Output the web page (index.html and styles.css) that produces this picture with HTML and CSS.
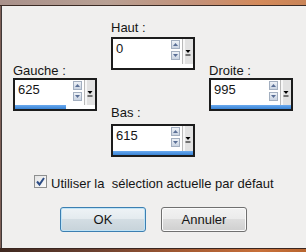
FILE: index.html
```html
<!DOCTYPE html>
<html lang="fr">
<head>
<meta charset="utf-8">
<title>Décalage</title>
<link rel="stylesheet" href="styles.css">
</head>
<body>
<div class="window">
  <div class="chrome-top"></div>
  <div class="body">
    <div class="fields">
      <div class="col col-side">
        <div class="lbl">Gauche :</div>
        <div class="field">
          <div class="field-top">
            <span class="value">625</span>
            <div class="spins">
              <span class="spin-btn"><svg width="7" height="7" viewBox="0 0 7 7"><path d="M1 5 L3.5 2 L6 5 Z" fill="#5a6f96"/></svg></span>
              <span class="spin-btn"><svg width="7" height="7" viewBox="0 0 7 7"><path d="M1 2 L3.5 5 L6 2 Z" fill="#5a6f96"/></svg></span>
            </div>
            <div class="strip"><svg width="6" height="6" viewBox="0 0 6 6"><path d="M0.5 0 L5.5 0 L3 3 Z" fill="#000"/><rect x="0.5" y="4.5" width="5" height="1" fill="#000"/></svg></div>
          </div>
          <div class="bar"><div class="bar-fill" style="width:64%"></div></div>
        </div>
      </div>
      <div class="col col-mid">
        <div class="lbl lbl-haut">Haut :</div>
        <div class="field">
          <div class="field-top">
            <span class="value">0</span>
            <div class="spins">
              <span class="spin-btn"><svg width="7" height="7" viewBox="0 0 7 7"><path d="M1 5 L3.5 2 L6 5 Z" fill="#5a6f96"/></svg></span>
              <span class="spin-btn"><svg width="7" height="7" viewBox="0 0 7 7"><path d="M1 2 L3.5 5 L6 2 Z" fill="#5a6f96"/></svg></span>
            </div>
            <div class="strip"><svg width="6" height="6" viewBox="0 0 6 6"><path d="M0.5 0 L5.5 0 L3 3 Z" fill="#000"/><rect x="0.5" y="4.5" width="5" height="1" fill="#000"/></svg></div>
          </div>
          <div class="bar"><div class="bar-fill" style="width:0%"></div></div>
        </div>
        <div class="lbl lbl-bas">Bas :</div>
        <div class="field">
          <div class="field-top">
            <span class="value">615</span>
            <div class="spins">
              <span class="spin-btn"><svg width="7" height="7" viewBox="0 0 7 7"><path d="M1 5 L3.5 2 L6 5 Z" fill="#5a6f96"/></svg></span>
              <span class="spin-btn"><svg width="7" height="7" viewBox="0 0 7 7"><path d="M1 2 L3.5 5 L6 2 Z" fill="#5a6f96"/></svg></span>
            </div>
            <div class="strip"><svg width="6" height="6" viewBox="0 0 6 6"><path d="M0.5 0 L5.5 0 L3 3 Z" fill="#000"/><rect x="0.5" y="4.5" width="5" height="1" fill="#000"/></svg></div>
          </div>
          <div class="bar"><div class="bar-fill" style="width:100%"></div></div>
        </div>
      </div>
      <div class="col col-side">
        <div class="lbl">Droite :</div>
        <div class="field">
          <div class="field-top">
            <span class="value">995</span>
            <div class="spins">
              <span class="spin-btn"><svg width="7" height="7" viewBox="0 0 7 7"><path d="M1 5 L3.5 2 L6 5 Z" fill="#5a6f96"/></svg></span>
              <span class="spin-btn"><svg width="7" height="7" viewBox="0 0 7 7"><path d="M1 2 L3.5 5 L6 2 Z" fill="#5a6f96"/></svg></span>
            </div>
            <div class="strip"><svg width="6" height="6" viewBox="0 0 6 6"><path d="M0.5 0 L5.5 0 L3 3 Z" fill="#000"/><rect x="0.5" y="4.5" width="5" height="1" fill="#000"/></svg></div>
          </div>
          <div class="bar"><div class="bar-fill" style="width:100%"></div></div>
        </div>
      </div>
    </div>
    <div class="check-row">
      <span class="checkbox"><svg width="11" height="11" viewBox="0 0 11 11"><path d="M2 5.5 L4.5 8.5 L9 2" fill="none" stroke="#2d4d86" stroke-width="2"/></svg></span>
      <span class="check-label">Utiliser la&nbsp; sélection actuelle par défaut</span>
    </div>
    <div class="buttons">
      <button class="btn btn-default">OK</button>
      <button class="btn">Annuler</button>
    </div>
  </div>
  <div class="chrome-bottom"></div>
</div>
</body>
</html>
```

FILE: styles.css
```css
html, body {
  margin: 0;
  padding: 0;
  width: 306px;
  height: 252px;
  overflow: hidden;
}
body {
  font-family: "Liberation Sans", Arial, sans-serif;
  font-size: 13px;
  color: #151515;
}
.window {
  width: 306px;
  height: 252px;
  display: flex;
  flex-direction: column;
  background: #f0efee;
}
.chrome-top {
  height: 5px;
  border-bottom: 1px solid #3b2b25;
  background: linear-gradient(to right, #a9918b, #b8a094 35%, #c49178 65%, #d48a5a 85%, #c98458);
}
.chrome-bottom {
  height: 3px;
  border-top: 1px solid #3a2620;
  background: linear-gradient(to right, #3e2820, #6a4030 30%, #a45a32 60%, #c8703a 85%, #b8652f);
}
.body {
  flex: 1;
  display: flex;
  flex-direction: column;
  border-left: 1px solid #7d5f56;
  box-shadow: inset 1px 0 0 #3f3838;
}
.fields {
  display: flex;
  gap: 14px;
  padding-left: 12px;
}
.col {
  width: 84px;
  display: flex;
  flex-direction: column;
}
.col-side { padding-top: 57px; }
.col-mid { padding-top: 14px; }
.lbl {
  line-height: 15px;
  height: 15px;
  white-space: nowrap;
}
.lbl-haut { margin-bottom: 2px; }
.lbl-bas { margin-top: 35px; margin-bottom: 4px; }
.field {
  width: 84px;
  height: 33px;
  box-sizing: border-box;
  border: 2px solid #1c1c1c;
  background: #fff;
  display: flex;
  flex-direction: column;
}
.field-top {
  height: 25px;
  display: flex;
}
.value {
  flex: 1;
  padding: 1.5px 0 0 3px;
  line-height: 15px;
}
.spins {
  width: 9px;
  margin-right: 2px;
  padding-top: 1px;
  display: flex;
  flex-direction: column;
  gap: 2px;
}
.spin-btn {
  width: 9px;
  height: 9px;
  box-sizing: border-box;
  border: 1px solid #a3afc0;
  background: linear-gradient(#eef2f7, #c9d3e1);
  display: flex;
  align-items: center;
  justify-content: center;
}
.strip {
  width: 11px;
  background: linear-gradient(to right, #b9b9b9 0 1px, #f7f7f7 1px 3px, #e2e2e2 3px);
  display: flex;
  align-items: center;
  justify-content: center;
  padding-top: 2px;
  box-sizing: border-box;
}
.bar {
  height: 4px;
  background: #fff;
}
.bar-fill {
  height: 100%;
  background: linear-gradient(#6aaaf0, #3a84d4);
}
.check-row {
  margin-top: 19px;
  padding-left: 33px;
  display: flex;
  align-items: flex-start;
  gap: 4px;
  line-height: 15px;
}
.checkbox {
  width: 13px;
  height: 13px;
  margin-top: -1px;
  box-sizing: border-box;
  border: 1px solid #8e8f8f;
  background: linear-gradient(135deg, #e4e4e4, #fbfbfb);
  display: flex;
  align-items: center;
  justify-content: center;
}
.check-label { white-space: nowrap; }
.buttons {
  margin-top: 16px;
  padding-left: 59px;
  display: flex;
  gap: 15px;
}
.btn {
  width: 86px;
  height: 25px;
  box-sizing: border-box;
  border: 1px solid #707070;
  border-radius: 3px;
  background: linear-gradient(#f2f2f2 0%, #ebebeb 50%, #dddddd 50%, #cfcfcf 100%);
  box-shadow: inset 0 0 0 1px #fbfbfb;
  font-family: "Liberation Sans", Arial, sans-serif;
  font-size: 13px;
  color: #151515;
  padding: 0;
}
.btn-default {
  border-color: #3c7fb1;
  background: linear-gradient(#eef3f6 0%, #e3eaee 50%, #d3dde3 50%, #c7d3da 100%);
  box-shadow: inset 0 0 0 1px #bfe3f6;
}
```
